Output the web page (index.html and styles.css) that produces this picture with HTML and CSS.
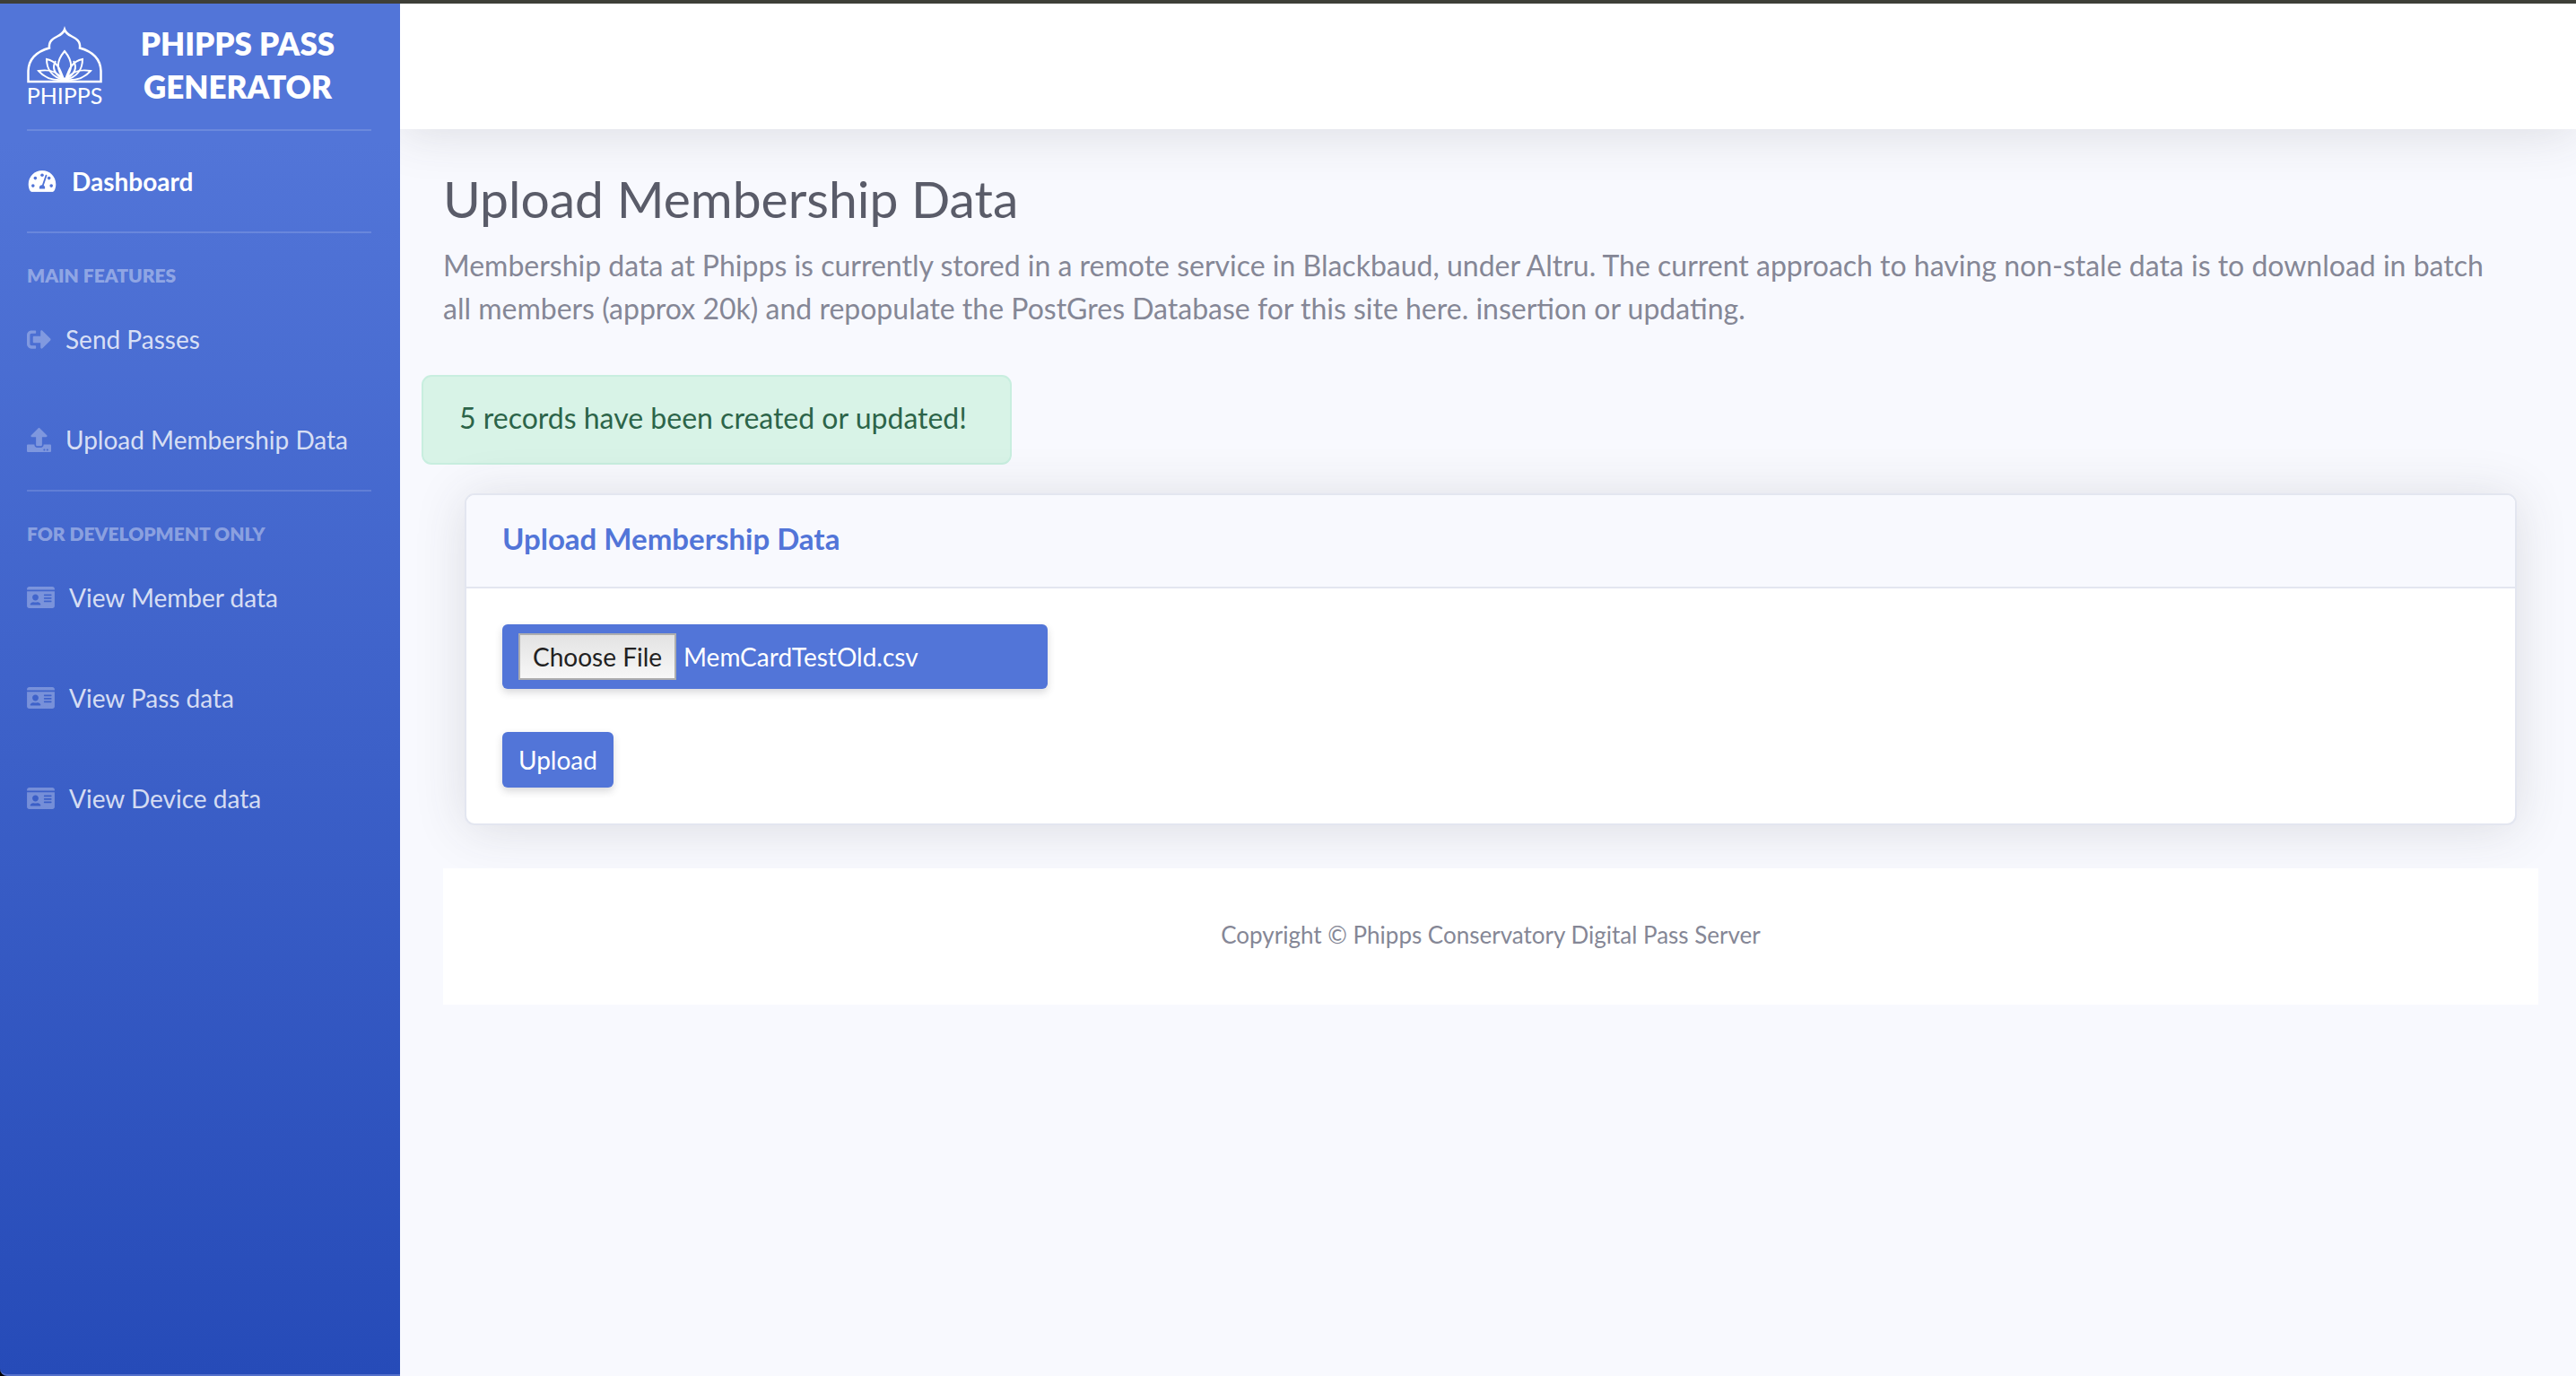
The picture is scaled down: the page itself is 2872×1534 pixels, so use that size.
FILE: index.html
```
<!DOCTYPE html>
<html lang="en">
<head>
<meta charset="utf-8">
<title>Upload Membership Data - Phipps Pass Generator</title>
<link rel="stylesheet" href="styles.css">
</head>
<body>
<svg class="sprite" aria-hidden="true">
  <symbol id="icon-card" viewBox="0 32 576 448">
    <path fill-rule="evenodd" d="M528 32H48C21.500 32 0 53.500 0 80v16h576V80c0-26.500-21.500-48-48-48zM0 432c0 26.500 21.500 48 48 48h480c26.500 0 48-21.500 48-48V128H0v304zM352 200c0-4.400 3.600-8 8-8h144c4.400 0 8 3.600 8 8v16c0 4.400-3.600 8-8 8H360c-4.400 0-8-3.600-8-8zM352 264c0-4.400 3.600-8 8-8h144c4.400 0 8 3.600 8 8v16c0 4.400-3.600 8-8 8H360c-4.400 0-8-3.600-8-8zM352 328c0-4.400 3.600-8 8-8h144c4.400 0 8 3.600 8 8v16c0 4.400-3.600 8-8 8H360c-4.400 0-8-3.600-8-8zM176 192c35.300 0 64 28.700 64 64s-28.700 64-64 64-64-28.700-64-64 28.700-64 64-64zM67.100 396.200C75.500 370.500 99.600 352 128 352h8.200c12.300 5.100 25.700 8 39.800 8s27.600-2.900 39.800-8h8.200c28.400 0 52.500 18.500 60.900 44.200 3.200 9.900-5.200 19.800-15.600 19.800H82.700c-10.400 0-18.800-10-15.600-19.800z"/>
  </symbol>
</svg>
<div class="browser-edge"></div>
<div class="wrapper">
  <nav class="sidebar" aria-label="Main">
    <a class="brand" href="#">
      <svg class="brand-logo" viewBox="0 0 84 84" role="img" aria-label="Phipps">
        <g fill="none" stroke="#fff" stroke-width="2.500">
          <path d="M1.500 59V47C2 35 9 26 25 21.500C24 14 29 11 34 8.500C38 6.500 41 4 42 1C43 4 46 6.500 50 8.500C55 11 60 14 59 21.500C75 26 82 35 82.500 47V59Z"/>
          <g stroke-width="2">
            <path d="M42 57C33 46 32 37 42 25C52 37 51 46 42 57Z"/>
            <path d="M41 57C37 44 33 36 22 34C22 45 28 54 41 57Z"/>
            <path d="M43 57C47 44 51 36 62 34C62 45 56 54 43 57Z"/>
            <path d="M41 57C34 47 25 45 13 47C20 55 28 58 41 57Z"/>
            <path d="M43 57C50 47 59 45 71 47C64 55 56 58 43 57Z"/>
            <path d="M40 56C30 50 28 43 32 36M44 56C54 50 56 43 52 36"/>
          </g>
        </g>
        <text class="brand-word" x="42" y="84" text-anchor="middle">PHIPPS</text>
      </svg>
      <span class="brand-name">PHIPPS PASS GENERATOR</span>
    </a>
    <hr class="divider">
    <a class="nav-link active" href="#">
      <svg class="icon icon-fixed" viewBox="-32 32 640 448" aria-hidden="true">
        <mask id="dial" maskUnits="userSpaceOnUse" x="-32" y="32" width="640" height="448">
          <rect x="-32" y="32" width="640" height="448" fill="#fff"/>
          <g fill="#000">
            <circle cx="96" cy="352" r="34"/><circle cx="144" cy="192" r="34"/><circle cx="288" cy="128" r="34"/><circle cx="432" cy="192" r="34"/><circle cx="480" cy="352" r="34"/>
            <path d="M373 136L300 352" fill="none" stroke="#000" stroke-width="34" stroke-linecap="round"/>
            <path d="M232 416a60 60 0 1 1 112 0z"/>
          </g>
        </mask>
        <path mask="url(#dial)" d="M288 32C129 32 0 161 0 320c0 53 14 102 39 145 6 10 16 15 28 15h443c11 0 22-5 27-15 25-43 39-92 39-145 0-159-129-288-288-288z"/>
      </svg>
      <span>Dashboard</span>
    </a>
    <hr class="divider">
    <h2 class="nav-heading">MAIN FEATURES</h2>
    <a class="nav-link" href="#">
      <svg class="icon icon-square" viewBox="0 0 512 512" aria-hidden="true"><path d="M497 273L329 441c-15 15-41 4.500-41-17v-96H152c-13.300 0-24-10.700-24-24v-96c0-13.300 10.700-24 24-24h136V88c0-21.400 25.900-32 41-17l168 168c9.300 9.400 9.300 24.600 0 34zM192 436v-40c0-6.600-5.400-12-12-12H96c-17.700 0-32-14.300-32-32V160c0-17.700 14.300-32 32-32h84c6.600 0 12-5.400 12-12V76c0-6.600-5.400-12-12-12H96c-53 0-96 43-96 96v192c0 53 43 96 96 96h84c6.600 0 12-5.400 12-12z"/></svg>
      <span>Send Passes</span>
    </a>
    <a class="nav-link" href="#">
      <svg class="icon icon-square" viewBox="0 0 512 512" aria-hidden="true"><path d="M296 384h-80c-13.300 0-24-10.700-24-24V192h-87.700c-17.800 0-26.700-21.500-14.100-34.100L242.300 5.700c7.500-7.500 19.800-7.500 27.300 0l152.200 152.200c12.600 12.600 3.700 34.100-14.100 34.100H320v168c0 13.300-10.700 24-24 24zm216-8v112c0 13.300-10.700 24-24 24H24c-13.300 0-24-10.700-24-24V376c0-13.300 10.700-24 24-24h136v8c0 30.900 25.100 56 56 56h80c30.900 0 56-25.100 56-56v-8h136c13.300 0 24 10.700 24 24zm-124 88c0-11-9-20-20-20s-20 9-20 20 9 20 20 20 20-9 20-20zm64 0c0-11-9-20-20-20s-20 9-20 20 9 20 20 20 20-9 20-20z"/></svg>
      <span>Upload Membership Data</span>
    </a>
    <hr class="divider">
    <h2 class="nav-heading">FOR DEVELOPMENT ONLY</h2>
    <a class="nav-link" href="#"><svg class="icon icon-wide" aria-hidden="true"><use href="#icon-card"/></svg><span>View Member data</span></a>
    <a class="nav-link" href="#"><svg class="icon icon-wide" aria-hidden="true"><use href="#icon-card"/></svg><span>View Pass data</span></a>
    <a class="nav-link" href="#"><svg class="icon icon-wide" aria-hidden="true"><use href="#icon-card"/></svg><span>View Device data</span></a>
  </nav>
  <div class="content">
    <header class="topbar"></header>
    <main class="page">
      <h1 class="page-title">Upload Membership Data</h1>
      <p class="page-intro">Membership data at Phipps is currently stored in a remote service in Blackbaud, under Altru. The current approach to having non-stale data is to download in batch all members (approx 20k) and repopulate the PostGres Database for this site here. insertion or updating.</p>
      <div class="alert" role="status">5 records have been created or updated!</div>
      <section class="card">
        <h2 class="card-header">Upload Membership Data</h2>
        <form class="card-body">
          <input class="btn file-input" id="member-file" type="file" accept=".csv" aria-label="Membership data file">
          <button class="btn" type="button">Upload</button>
        </form>
      </section>
      <footer class="footer">Copyright © Phipps Conservatory Digital Pass Server</footer>
    </main>
  </div>
</div>
<script src="script.js"></script>
</body>
</html>
```
FILE: styles.css
```
* { box-sizing: border-box; }

body {
  margin: 0;
  min-height: 100vh;
  display: flex;
  flex-direction: column;
  background: #000;
  color: #858796;
  font-family: Lato, "Liberation Sans", sans-serif;
  font-size: 32px;
  line-height: 48px;
}

h1, h2, p { margin: 0; }
a { color: inherit; text-decoration: none; }

.sprite { display: none; }

.browser-edge { height: 4px; background: #3e3f38; }

.wrapper { flex: 1; display: flex; }

/* Sidebar */
.sidebar {
  flex: none;
  width: 446px;
  background: linear-gradient(180deg, #5275d8 10%, #264bb8 100%);
  border-bottom: 2px solid #5571cb;
  border-bottom-left-radius: 8px;
  color: #fff;
}

.brand {
  height: 140px;
  padding: 0 30px;
  display: flex;
  align-items: center;
}
.brand-logo { flex: none; width: 84px; height: 84px; overflow: visible; }
.brand-word { font-size: 25px; fill: #fff; }
.brand-name {
  flex: 1;
  padding: 0 16px 4px;
  font-weight: 800;
  font-size: 35px;
  text-align: center;
}

.divider {
  margin: 0 32px 0 30px;
  border: 0;
  height: 2px;
  background: rgba(255, 255, 255, .15);
}

.nav-heading {
  padding: 32px 30px 0;
  font-size: 21px;
  line-height: 30px;
  font-weight: 800;
  color: rgba(255, 255, 255, .4);
}

.nav-link {
  height: 112px;
  padding: 0 30px;
  display: flex;
  align-items: center;
  gap: 16px;
  font-size: 28px;
  color: rgba(255, 255, 255, .8);
  white-space: nowrap;
}
.nav-link.active { color: #fff; font-weight: 700; }

.icon { flex: none; fill: rgba(255, 255, 255, .3); }
.active .icon { fill: #fff; }
.icon-square { width: 27px; height: 27px; }
.icon-wide { width: 31px; height: 24px; }
.icon-fixed { width: 34px; height: 24px; }

/* Content */
.content { flex: 1; min-width: 0; background: #f8f9fe; }

.topbar {
  height: 140px;
  background: #fff;
  box-shadow: 0 4px 56px rgba(58, 59, 69, .15);
  clip-path: inset(0 0 -80px 0);
}

.page { padding: 44px 42px 0 48px; }

.page-title {
  margin-bottom: 18px;
  font-size: 57px;
  line-height: 66px;
  font-weight: 400;
  color: #5a5c69;
}

.page-intro { padding-right: 40px; }

.alert {
  width: fit-content;
  margin: 50px 0 32px -24px;
  padding: 22px 48px 26px 40px;
  border: 2px solid #c8eedf;
  border-radius: 11px;
  background: #d8f3e7;
  color: #2c6449;
}

.card {
  margin: 0 24px 48px;
  border: 2px solid #e3e6f0;
  border-radius: 11px;
  background: #fff;
  box-shadow: 0 4px 56px rgba(58, 59, 69, .15);
}
.card-header {
  padding: 24px 40px 30px;
  border-bottom: 2px solid #e3e6f0;
  border-radius: 9px 9px 0 0;
  background: #f8f9fe;
  color: #5275d8;
  font-size: 33px;
  font-weight: 700;
}
.card-body {
  padding: 40px;
  display: flex;
  flex-direction: column;
  align-items: flex-start;
  gap: 48px;
}

.btn {
  padding: 10px 18px;
  border: 0;
  border-radius: 6px;
  background: #5275d8;
  box-shadow: 0 4px 8px rgba(58, 59, 69, .2);
  color: #fff;
  font-family: inherit;
  font-size: 28px;
  line-height: 42px;
}
.file-input { width: 608px; height: 72px; line-height: 48px; }
.file-input::file-selector-button {
  height: 52px;
  margin-right: 8px;
  padding: 0 14px;
  border: 2px solid #aeaeae;
  background: linear-gradient(#e3e3e3, #f7f7f7);
  color: #222;
  font: inherit;
}

.footer {
  padding: 58px 0 62px;
  background: #fff;
  font-size: 26px;
  line-height: 32px;
  text-align: center;
}
```
FILE: script.js
```
const selection = new DataTransfer();
selection.items.add(new File(["id\n"], "MemCardTestOld.csv", { type: "text/csv" }));
document.getElementById("member-file").files = selection.files;
```
